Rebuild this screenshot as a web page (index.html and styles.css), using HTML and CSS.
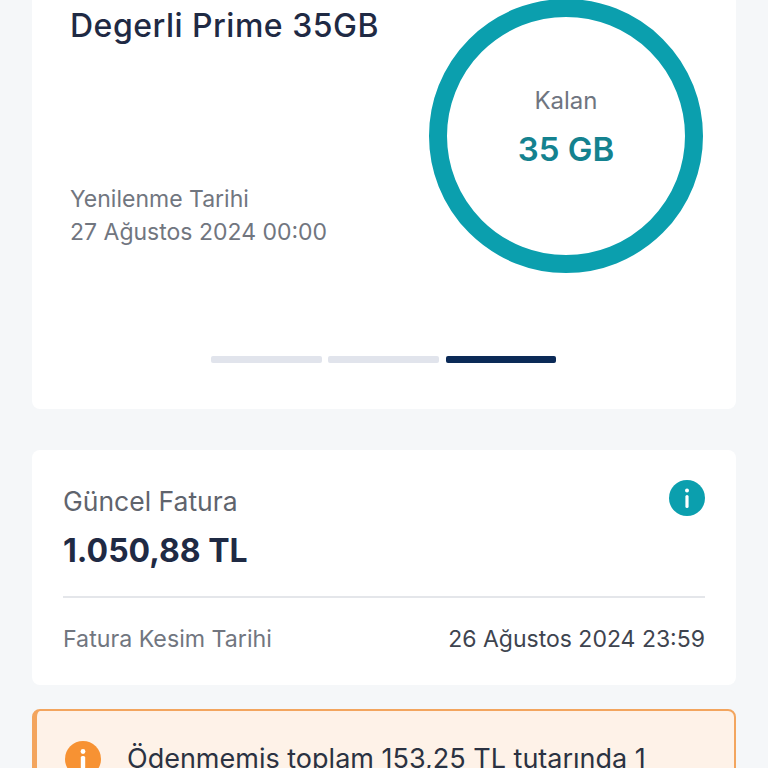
FILE: index.html
```html
<!DOCTYPE html>
<html>
    <head>
        <title>Paketim</title>
        <link rel="stylesheet" href="styles.css">
    </head>
    <body>
        <div class="page">
            <section class="card packageCard">
                <div class="packageTop">
                    <div class="packageInfo">
                        <h1 class="packageName">Degerli Prime 35GB</h1>
                        <p class="renewal">Yenilenme Tarihi<br>27 Ağustos 2024 00:00</p>
                    </div>
                    <div class="ring">
                        <span class="ringLabel">Kalan</span>
                        <span class="ringValue">35 GB</span>
                    </div>
                </div>
                <div class="pager">
                    <span class="pagerItem"></span>
                    <span class="pagerItem"></span>
                    <span class="pagerItem active"></span>
                </div>
            </section>

            <section class="card billCard">
                <div class="billHead">
                    <div>
                        <div class="billLabel">Güncel Fatura</div>
                        <div class="billAmount">1.050,88 TL</div>
                    </div>
                    <svg class="infoIcon" viewBox="0 0 36 36" width="36" height="36">
                        <circle cx="18" cy="18" r="18" fill="#0b9fae"/>
                        <circle cx="18" cy="10.5" r="2" fill="#fff"/>
                        <rect x="16.4" y="15" width="3.2" height="13" rx="1.6" fill="#fff"/>
                    </svg>
                </div>
                <div class="billFoot">
                    <span class="billFootLabel">Fatura Kesim Tarihi</span>
                    <span class="billFootDate">26 Ağustos 2024 23:59</span>
                </div>
            </section>

            <section class="warning">
                <svg class="warningIcon" viewBox="0 0 36 36" width="36" height="36">
                    <circle cx="18" cy="18" r="18" fill="#f79233"/>
                    <circle cx="18" cy="10.5" r="2.4" fill="#fff"/>
                    <rect x="15.8" y="15" width="4.4" height="13" rx="1.6" fill="#fff"/>
                </svg>
                <p class="warningText">Ödenmemiş toplam 153,25 TL tutarında 1 adet faturanız bulunmaktadır.</p>
            </section>
        </div>
    </body>
</html>
```

FILE: styles.css
```css
html, body {
    margin: 0;
    height: 768px;
    overflow: hidden;
    background-color: #f5f7f9;
}

body {
    font-family: "Inter", "Noto Sans", sans-serif;
}

.page {
    padding: 0 32px;
}

.card {
    background-color: #fff;
    border-radius: 8px;
}

.packageCard {
    height: 409px;
    border-radius: 0 0 8px 8px;
    margin-bottom: 41px;
}

.packageTop {
    display: flex;
    justify-content: space-between;
    height: 356px;
    padding: 0 33px 0 38px;
}

.packageName {
    margin: 7px 0 0 0;
    font-size: 32px;
    line-height: 38px;
    letter-spacing: 0.5px;
    font-weight: 500;
    color: #1f2a44;
}

.renewal {
    margin: 138px 0 0 0;
    font-size: 23px;
    line-height: 33px;
    color: #71767f;
}

.ring {
    width: 274px;
    height: 274px;
    margin-top: -1px;
    box-sizing: border-box;
    border: 18px solid #0b9fae;
    border-radius: 50%;
    display: flex;
    flex-direction: column;
    align-items: center;
    padding-top: 69px;
}

.ringLabel {
    font-size: 24px;
    line-height: 30px;
    color: #6f7580;
}

.ringValue {
    margin-top: 13px;
    font-size: 33px;
    line-height: 40px;
    font-weight: 600;
    color: #14828f;
}

.pager {
    display: flex;
    justify-content: center;
    gap: 6px;
    padding-right: 1px;
}

.pagerItem {
    width: 111px;
    height: 7px;
    border-radius: 2px;
    background-color: #e1e4ec;
}

.pagerItem.active {
    width: 110px;
    margin-left: 1px;
    background-color: #0b2a57;
}

.billCard {
    height: 235px;
    box-sizing: border-box;
    padding: 30px 31px 0 31px;
    margin-bottom: 24px;
}

.billHead {
    display: flex;
    justify-content: space-between;
    height: 116px;
    border-bottom: 2px solid #e4e6ea;
}

.billLabel {
    font-size: 26.5px;
    line-height: 42px;
    color: #5f646d;
}

.billAmount {
    margin-top: 9px;
    font-size: 32px;
    line-height: 40px;
    font-weight: 700;
    color: #1f2a44;
}

.billFoot {
    display: flex;
    justify-content: space-between;
    align-items: center;
    height: 82px;
}

.billFootLabel {
    font-size: 23.2px;
    color: #71767f;
}

.billFootDate {
    font-size: 23px;
    color: #3e444f;
}

.warning {
    display: flex;
    gap: 26px;
    box-sizing: border-box;
    height: 200px;
    padding: 30px 60px 30px 28px;
    background-color: #fef2e8;
    border: 2px solid #f3a55e;
    border-left-width: 5px;
    border-radius: 8px;
}

.warningIcon {
    flex-shrink: 0;
}

.warningText {
    margin: 0;
    font-size: 27px;
    line-height: 36px;
    color: #2b3242;
}
```
